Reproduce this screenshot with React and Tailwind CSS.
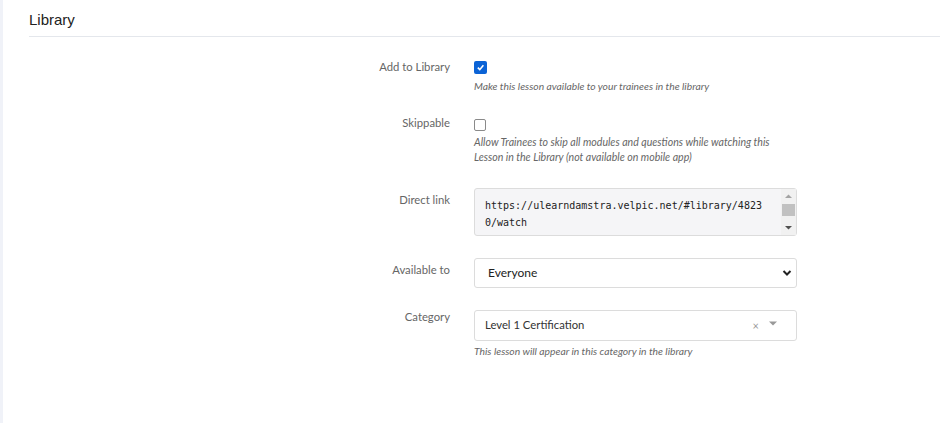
import React from "react";

const body = { fontFamily: "Lato, 'Open Sans', sans-serif" };

function Row({ label, labelPad = "pt-0", children }) {
  return (
    <div className="flex">
      <div className={`w-[421px] text-right text-[11.3px] leading-[18px] text-[#666] ${labelPad}`}>{label}</div>
      <div className="ml-[24px] w-[323px]">{children}</div>
    </div>
  );
}

export default function App() {
  return (
    <div className="flex h-[423px] w-[940px] bg-white" style={body}>
      <div className="w-[3px] bg-[#f0f2f8]" />
      <div className="flex-1 pl-[26px]">
        <div className="flex h-[37px] items-start border-b border-[#e4e7ec] pt-[11px]">
          <h2 className="text-[15px] leading-[18px] text-[#222]" style={{ fontFamily: "'Liberation Sans', Arial, sans-serif" }}>
            Library
          </h2>
        </div>

        <Row label="Add to Library" labelPad="pt-[21px]">
          <div className="pt-[24px]">
            <div className="flex h-[13px] w-[13px] items-center justify-center rounded-[2px] bg-[#0b63d6]">
              <svg width="9" height="9" viewBox="0 0 10 10"><path d="M2 5.2 L4.2 7.4 L8.2 2.6" stroke="white" strokeWidth="1.8" fill="none" /></svg>
            </div>
            <p className="mt-[5px] text-[10.3px] italic leading-[14px] text-[#666]">Make this lesson available to your trainees in the library</p>
          </div>
        </Row>

        <Row label="Skippable" labelPad="pt-[21px]">
          <div className="pt-[26px]">
            <div className="h-[12px] w-[12px] rounded-[2px] border border-[#8a8a8a] bg-white" />
            <p className="mt-[4px] text-[10.6px] italic leading-[15px] text-[#666]">
              Allow Trainees to skip all modules and questions while watching this
              <br />
              Lesson in the Library (not available on mobile app)
            </p>
          </div>
        </Row>

        <Row label="Direct link" labelPad="pt-[26px]">
          <div className="pt-[23px]">
            <div className="flex h-[48px] rounded-[3px] border border-[#dcdcdc] bg-[#f5f5f7]">
              <div className="flex-1 px-[10px] pt-[8px] text-[10px] leading-[17px] text-[#222]" style={{ fontFamily: "'DejaVu Sans Mono', monospace" }}>
                https://ulearndamstra.velpic.net/#library/4823<br />0/watch
              </div>
              <div className="flex w-[15px] flex-col items-center bg-[#f1f1f1]">
                <svg width="15" height="15" viewBox="0 0 15 15"><path d="M4 9 L7.5 5.5 L11 9 Z" fill="#a3a3a3" /></svg>
                <div className="h-[12px] w-[13px] bg-[#c1c1c1]" />
                <div className="flex-1" />
                <svg width="15" height="13" viewBox="0 0 15 13"><path d="M4 4 L7.5 7.5 L11 4 Z" fill="#505050" /></svg>
              </div>
            </div>
          </div>
        </Row>

        <Row label="Available to" labelPad="pt-[25px]">
          <div className="pt-[22px]">
            <div className="flex h-[30px] items-center justify-between rounded-[3px] border border-[#dcdcdc] bg-white pl-[13px] pr-[3px] text-[12px] text-[#222]">
              <span>Everyone</span>
              <svg width="12" height="12" viewBox="0 0 12 12"><path d="M2.5 4 L6 7.5 L9.5 4" stroke="#222" strokeWidth="2" fill="none" /></svg>
            </div>
          </div>
        </Row>

        <Row label="Category" labelPad="pt-[20px]">
          <div className="pt-[22px]">
            <div className="flex h-[31px] items-center rounded-[3px] border border-[#dcdcdc] bg-white pl-[10px] pr-[18px] text-[11.3px] text-[#333]">
              <span className="flex-1">Level 1 Certification</span>
              <span className="mr-[9px] mt-[2px] text-[11px] text-[#999]">×</span>
              <svg width="10" height="6" viewBox="0 0 10 6" className="mb-[4px]"><path d="M1 0.5 L9 0.5 L5 4.5 Z" fill="#999" /></svg>
            </div>
            <p className="mt-[3px] text-[10.3px] italic leading-[14px] text-[#666]">This lesson will appear in this category in the library</p>
          </div>
        </Row>
      </div>
    </div>
  );
}
